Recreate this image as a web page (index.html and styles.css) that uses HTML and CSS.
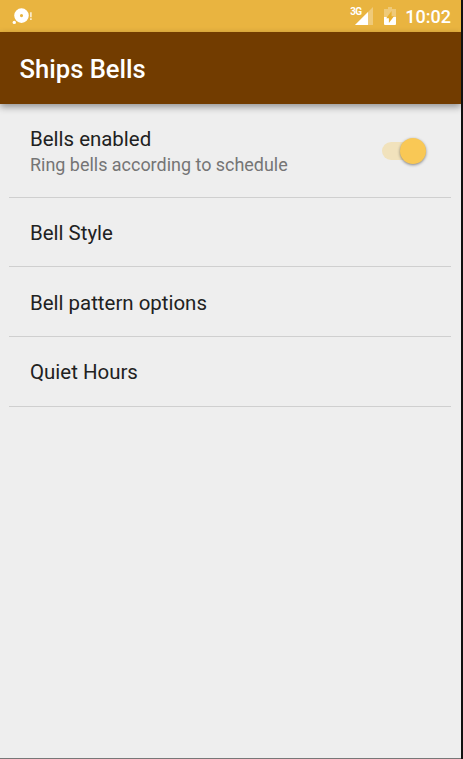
FILE: index.html
```html
<!DOCTYPE html>
<html lang="en">
<head>
<meta charset="utf-8">
<title>Ships Bells</title>
<link rel="stylesheet" href="styles.css">
</head>
<body>
<div class="screen">
  <header class="status">
    <svg class="notif" width="22" height="20" viewBox="0 0 22 20"><path fill="#fff" fill-rule="evenodd" d="M9.5 2.3a7.3 7.3 0 1 1 0 14.6a7.3 7.3 0 1 1 0-14.6zM9.5 8a1.6 1.6 0 1 0 0 3.2a1.6 1.6 0 1 0 0-3.2z"/><circle cx="2.3" cy="16.4" r="1.7" fill="#fff"/><path d="M18.9 6.2v5M18.9 12.3v1.6" stroke="#fff" stroke-opacity=".85" stroke-width="1.5"/></svg>
    <div class="tray">
      <span class="net">3G</span>
      <svg class="signal" width="18" height="18" viewBox="0 0 18 18"><path fill="#fff" fill-opacity=".3" d="M18 0v18H0z"/><path fill="#fff" d="M13 5v13H0z"/></svg>
      <svg class="battery" width="12" height="18" viewBox="0 0 12 18"><path fill="#fff" fill-opacity=".3" d="M4 0h4v2h4v8H0V2h4z"/><path fill="#fff" d="M0 10h12v7q0 1-1 1H1q-1 0-1-1z"/><path fill="#e9b02f" d="M7.6 4V9.2H10L4.9 16V11.3H2.2z"/></svg>
      <span class="clock">10:02</span>
    </div>
  </header>
  <div class="appbar"><h1>Ships Bells</h1></div>
  <main class="list">
    <div class="row first">
      <div class="label"><div class="name">Bells enabled</div><div class="summary">Ring bells according to schedule</div></div>
      <div class="switch"><div class="thumb"></div></div>
    </div>
    <div class="row lowered"><div class="name">Bell Style</div></div>
    <div class="row lowered taller"><div class="name">Bell pattern options</div></div>
    <div class="row taller"><div class="name">Quiet Hours</div></div>
  </main>
</div>
</body>
</html>
```

FILE: styles.css
```css
* { box-sizing: border-box; }
body { margin: 0; background: #111; font-family: Roboto, sans-serif; }
.screen { width: 461px; height: 759px; background: #eee; border-bottom: 1px solid #777; display: flex; flex-direction: column; overflow: hidden; }
.status { height: 32px; background: #e9b440; display: flex; justify-content: space-between; padding: 0 10px 0 12px; color: #fff; }
.notif { margin-top: 6px; }
.tray { display: flex; }
.net { font-size: 10px; line-height: 12px; font-weight: 700; margin: 6px -6px 0 0; letter-spacing: -.7px; }
.signal { margin: 7px 11px 0 0; }
.battery { margin: 7px 9px 0 0; }
.clock { font-size: 18px; font-weight: 500; line-height: 33px; }
.appbar { height: 72px; flex: none; background: #723c00; padding: 0 19.5px; box-shadow: 0 3px 7px rgba(0,0,0,.38); }
h1 { margin: 0; color: #fff; font-size: 25.6px; line-height: 74px; font-weight: 500; }
.list { padding: 0 10px 0 9px; }
.row { height: 69px; border-bottom: 1px solid #cfcfcf; padding: 0 25px 0 21px; display: flex; align-items: center; justify-content: space-between; }
.row.first { height: 94px; }
.row.first .label { padding-top: 2px; }
.row.lowered { padding-top: 2px; }
.row.taller { height: 70px; }
.name { font-size: 20.45px; line-height: 26px; color: #212121; }
.summary { font-size: 17.95px; line-height: 26px; color: #757575; }
.switch { width: 44px; height: 18px; border-radius: 9px; background: #f1e2bc; display: flex; align-items: center; justify-content: flex-end; }
.thumb { width: 26px; height: 26px; border-radius: 50%; background: #f9c855; box-shadow: 0 1px 3px rgba(0,0,0,.45); }
```
